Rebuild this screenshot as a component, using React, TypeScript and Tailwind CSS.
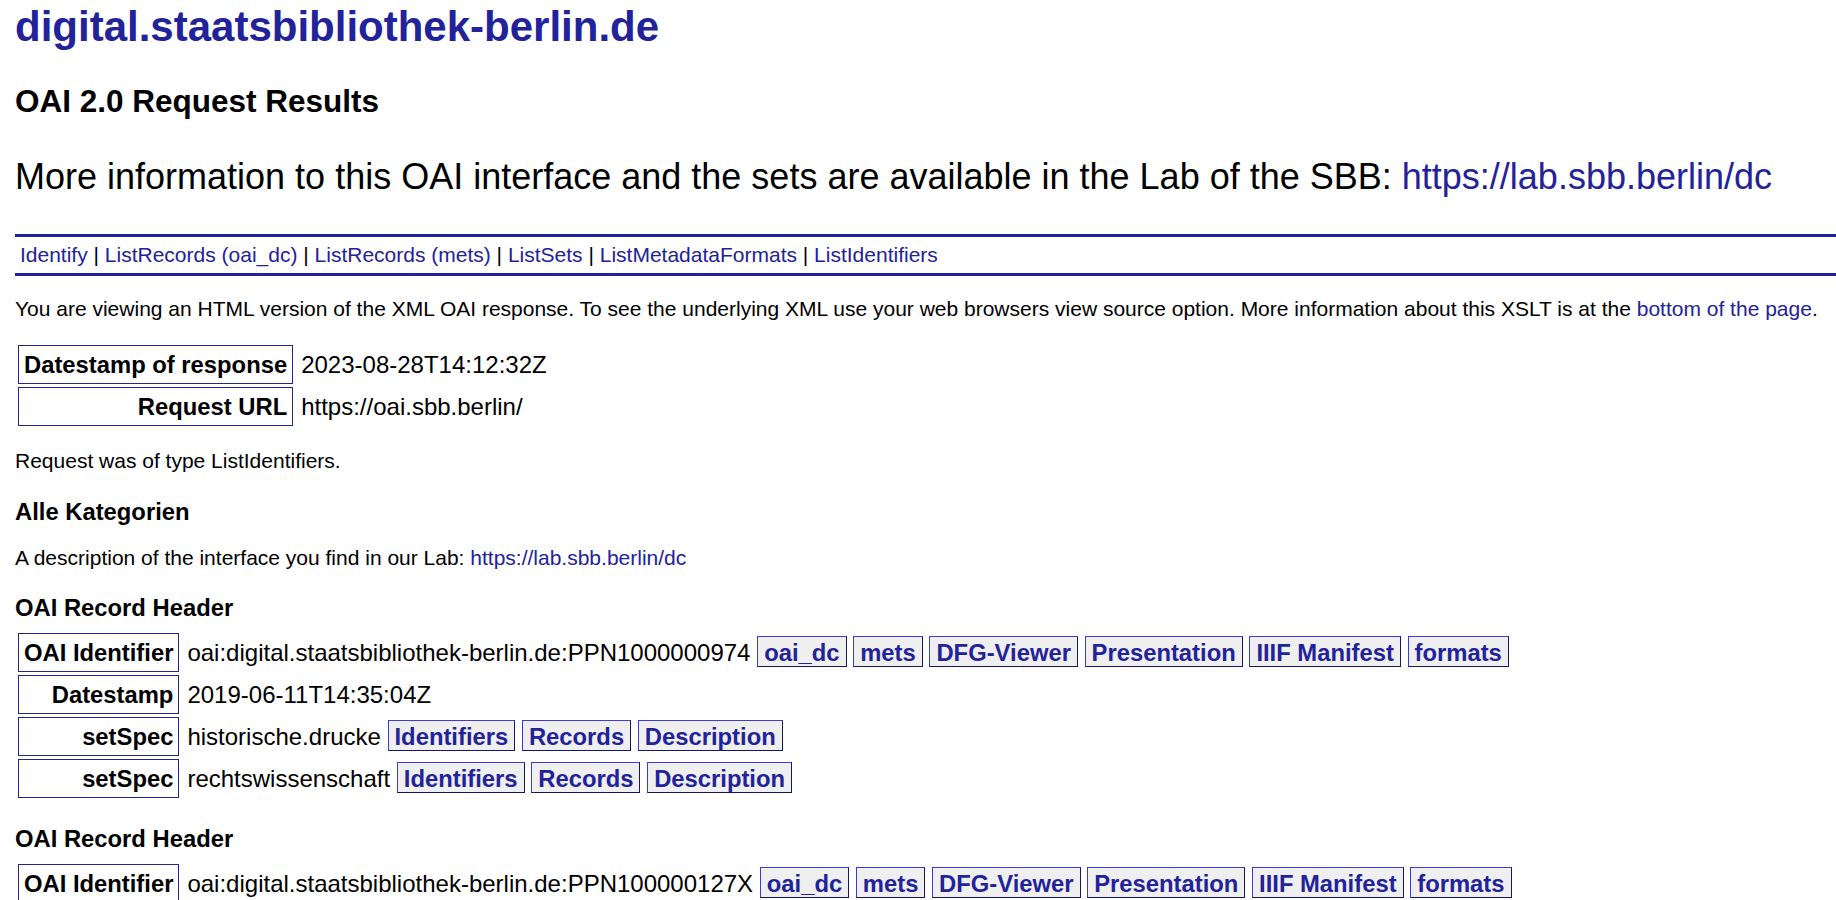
import React from 'react';

const NAV = ['Identify', 'ListRecords (oai_dc)', 'ListRecords (mets)', 'ListSets', 'ListMetadataFormats', 'ListIdentifiers'];

const ID_LINKS = ['oai_dc', 'mets', 'DFG-Viewer', 'Presentation', 'IIIF Manifest', 'formats'];
const SET_LINKS = ['Identifiers', 'Records', 'Description'];

interface Row {
  key: string;
  value: string;
  links?: string[];
}

const records: Row[][] = [
  [
    { key: 'OAI Identifier', value: 'oai:digital.staatsbibliothek-berlin.de:PPN1000000974', links: ID_LINKS },
    { key: 'Datestamp', value: '2019-06-11T14:35:04Z' },
    { key: 'setSpec', value: 'historische.drucke', links: SET_LINKS },
    { key: 'setSpec', value: 'rechtswissenschaft', links: SET_LINKS },
  ],
  [
    { key: 'OAI Identifier', value: 'oai:digital.staatsbibliothek-berlin.de:PPN100000127X', links: ID_LINKS },
    { key: 'Datestamp', value: '2019-06-11T14:35:05Z' },
    { key: 'setSpec', value: 'historische.drucke', links: SET_LINKS },
    { key: 'setSpec', value: 'rechtswissenschaft', links: SET_LINKS },
  ],
];

const LinkButton = ({ label }: { label: string }) => (
  <a className="inline-block mt-[-2px] px-[6px] pt-[2px] pb-0 text-[23.8px] leading-[27px] font-bold text-[#22229b] bg-[#efefef] border border-t-[#3b3be0] border-l-[#3b3be0] border-b-[#16166b] border-r-[#16166b] cursor-pointer">
    {label}
  </a>
);

const KeyValueTable = ({ rows, className }: { rows: Row[]; className: string }) => (
  <table className={`border-separate border-spacing-[3px] leading-[29px] ${className}`}>
    <tbody>
      {rows.map((r, i) => (
        <tr key={i}>
          <td className="border border-[#25258f] px-[5px] py-[4px] text-right text-[23.8px] font-bold whitespace-nowrap">{r.key}</td>
          <td className="px-[5px] py-[4px] text-[24px] whitespace-nowrap">
            {r.value}
            {r.links?.map(l => (
              <React.Fragment key={l}>
                {' '}
                <LinkButton label={l} />
              </React.Fragment>
            ))}
          </td>
        </tr>
      ))}
    </tbody>
  </table>
);

export default function App() {
  return (
    <div className="min-h-screen bg-white pl-[15px] text-black font-['Liberation_Sans',Arial,sans-serif]">
      {/* Site title */}
      <h1 className="pt-[3px] text-[42px] leading-[48px] font-bold text-[#22229b]">digital.staatsbibliothek-berlin.de</h1>
      <h2 className="mt-[32px] text-[31.5px] leading-[36px] font-bold">OAI 2.0 Request Results</h2>
      <h3 className="mt-[37px] text-[36px] leading-[41px] font-normal whitespace-nowrap">
        More information to this OAI interface and the sets are available in the Lab of the SBB:{' '}
        <a className="text-[#22229b]">https://lab.sbb.berlin/dc</a>
      </h3>

      {/* Quick links */}
      <div className="mt-[37px] border-y-[3px] border-[#22229b] pl-[5px] py-[6px] text-[21px] leading-[24px]">
        {NAV.map((n, i) => (
          <React.Fragment key={n}>
            {i > 0 && ' | '}
            <a className="text-[#22229b] cursor-pointer">{n}</a>
          </React.Fragment>
        ))}
      </div>

      <p className="mt-[21px] text-[21px] leading-[24px] whitespace-nowrap">
        You are viewing an HTML version of the XML OAI response. To see the underlying XML use your web browsers view source option. More information about this XSLT is at the{' '}
        <a className="text-[#22229b]">bottom of the page</a>.
      </p>

      <KeyValueTable
        className="mt-[21px]"
        rows={[
          { key: 'Datestamp of response', value: '2023-08-28T14:12:32Z' },
          { key: 'Request URL', value: 'https://oai.sbb.berlin/' },
        ]}
      />

      <p className="mt-[20px] text-[21px] leading-[24px]">Request was of type ListIdentifiers.</p>

      <h3 className="mt-[25px] text-[23.8px] leading-[27px] font-bold">Alle Kategorien</h3>
      <p className="mt-[21px] text-[21px] leading-[24px]">
        A description of the interface you find in our Lab: <a className="text-[#22229b]">https://lab.sbb.berlin/dc</a>
      </p>

      {records.map((rows, i) => (
        <div key={i}>
          <h3 className="mt-[24px] text-[23.8px] leading-[27px] font-bold">OAI Record Header</h3>
          <KeyValueTable className="mt-[9px]" rows={rows} />
        </div>
      ))}
    </div>
  );
}
